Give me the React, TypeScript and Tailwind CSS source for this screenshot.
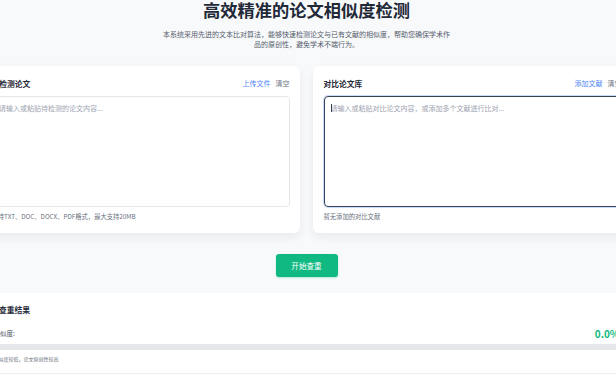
import React from "react";

function Card({
  title,
  actions,
  placeholder,
  hint,
  focused,
}: {
  title: string;
  actions: [string, string];
  placeholder: string;
  hint: string;
  focused?: boolean;
}) {
  return (
    <div className="bg-white rounded-[6px] shadow-[0_4px_10px_rgba(15,23,42,0.07)] px-[10.5px] pt-[12px] pb-[12px]">
      <div className="flex items-center justify-between h-[11px] mb-[6.7px]">
        <span className="text-[7.75px] leading-[11px] font-bold text-[#1f2937]">{title}</span>
        <div className="flex gap-[5px] text-[7px] leading-[11px]">
          <span className="text-[#4f86f7]">{actions[0]}</span>
          <span className="text-[#6b7280]">{actions[1]}</span>
        </div>
      </div>
      <div className="relative">
        <textarea
          readOnly
          placeholder={placeholder}
          className={
            focused
              ? "block w-full h-[111px] resize-none rounded-[4px] border-[1.5px] border-[#3a4150] shadow-[0_0_0_1px_#c7dbfb] px-[6px] py-[6px] text-[7px] leading-[10px] outline-none placeholder:text-[#9ca3af]"
              : "block w-full h-[111px] resize-none rounded-[4px] border border-[#e5e7eb] px-[6.5px] py-[6.5px] text-[7px] leading-[10px] outline-none placeholder:text-[#9ca3af]"
          }
        />
        {focused && (
          <span className="absolute left-[7px] top-[8px] w-[1px] h-[8px] bg-[#374151]" />
        )}
      </div>
      <div className="mt-[6.6px] text-[6.3px] leading-[8px] text-[#6b7280]">{hint}</div>
    </div>
  );
}

export default function App() {
  return (
    <div className="w-[616px] h-[380px] overflow-hidden bg-[#f8f9fb] font-['Noto_Sans_CJK_SC','Noto_Sans',sans-serif]">
      <div className="w-[613px] flex flex-col items-center">
        <h1 className="text-[17.25px] leading-[20px] font-bold text-[#1f2937] whitespace-nowrap">
          高效精准的论文相似度检测
        </h1>
        <p className="mt-[9px] w-[290px] text-center text-[7px] leading-[10px] text-[#555d6b]">
          本系统采用先进的文本比对算法，能够快速检测论文与已有文献的相似度，帮助您确保学术作品的原创性，避免学术不端行为。
        </p>
        <div className="mt-[17px] grid grid-cols-2 gap-[13px] w-[651px] shrink-0">
          <Card
            title="待检测论文"
            actions={["上传文件", "清空"]}
            placeholder="请输入或粘贴待检测的论文内容..."
            hint="支持TXT、DOC、DOCX、PDF格式，最大支持20MB"
          />
          <Card
            title="对比论文库"
            actions={["添加文献", "清空"]}
            placeholder="请输入或粘贴对比论文内容，或添加多个文献进行比对..."
            hint="暂无添加的对比文献"
            focused
          />
        </div>
        <button className="mt-[21px] w-[62px] h-[23px] rounded-[3px] bg-[#10b981] text-white text-[7.6px] shadow-[0_1px_2px_rgba(16,185,129,0.3)]">
          开始查重
        </button>
        <div className="mt-[16px] w-[660px] shrink-0 bg-white pt-[11px]">
          <div className="w-[626px] mx-auto">
            <h2 className="pl-[5.5px] text-[7.75px] leading-[12px] font-bold text-[#1f2937]">查重结果</h2>
            <div className="mt-[10.3px] h-[14px] flex items-center justify-between">
              <span className="text-[6.5px] text-[#4b5563]">相似度:</span>
              <span className="text-[10px] font-bold text-[#10b981]">0.0%</span>
            </div>
            <div className="mt-[3px] h-[6.7px] w-full rounded-full bg-[#e5e7eb]" />
            <p className="mt-[5px] text-[5px] leading-[8px] text-[#6b7280]">相似度较低，论文原创性较高</p>
          </div>
          <div className="mt-[10px] border-t border-[#eef0f3] h-[20px]" />
        </div>
      </div>
    </div>
  );
}
